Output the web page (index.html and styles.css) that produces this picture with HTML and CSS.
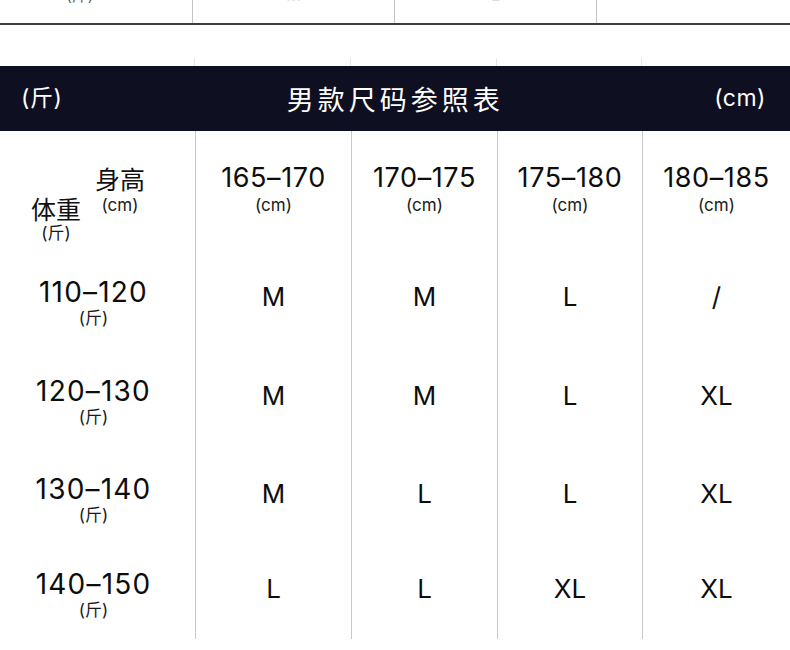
FILE: index.html
```html
<!DOCTYPE html>
<html lang="zh">
<head>
<meta charset="utf-8">
<title>男款尺码参照表</title>
<link rel="stylesheet" href="styles.css">
</head>
<body>
<div class="page">
  <div class="prev-row">
    <div class="prev-cell"><span class="peek dark">(斤)</span></div>
    <div class="prev-cell"><span class="peek">M</span></div>
    <div class="prev-cell"><span class="peek">L</span></div>
    <div class="prev-cell"></div>
  </div>
  <div class="spacer">
    <div class="tick-col"></div>
    <div class="tick-col"></div>
    <div class="tick-col"></div>
    <div class="tick-col"></div>
    <div class="tick-col last"></div>
  </div>
  <div class="banner">
    <span class="banner-unit">(斤)</span>
    <span class="banner-title">男款尺码参照表</span>
    <span class="banner-unit">(cm)</span>
  </div>
  <div class="table">
    <div class="row head">
      <div class="cell corner">
        <div class="corner-w"><div class="cj">体重</div><div class="unit">(斤)</div></div>
        <div class="corner-h"><div class="cj">身高</div><div class="unit">(cm)</div></div>
      </div>
      <div class="cell col"><div class="num">165–170</div><div class="unit">(cm)</div></div>
      <div class="cell col"><div class="num">170–175</div><div class="unit">(cm)</div></div>
      <div class="cell col"><div class="num">175–180</div><div class="unit">(cm)</div></div>
      <div class="cell col"><div class="num">180–185</div><div class="unit">(cm)</div></div>
    </div>
    <div class="row r1">
      <div class="cell label"><div class="num">110–120</div><div class="unit">(斤)</div></div>
      <div class="cell size">M</div>
      <div class="cell size">M</div>
      <div class="cell size">L</div>
      <div class="cell size">/</div>
    </div>
    <div class="row r2">
      <div class="cell label"><div class="num">120–130</div><div class="unit">(斤)</div></div>
      <div class="cell size">M</div>
      <div class="cell size">M</div>
      <div class="cell size">L</div>
      <div class="cell size">XL</div>
    </div>
    <div class="row r3">
      <div class="cell label"><div class="num">130–140</div><div class="unit">(斤)</div></div>
      <div class="cell size">M</div>
      <div class="cell size">L</div>
      <div class="cell size">L</div>
      <div class="cell size">XL</div>
    </div>
    <div class="row r4">
      <div class="cell label"><div class="num">140–150</div><div class="unit">(斤)</div></div>
      <div class="cell size">L</div>
      <div class="cell size">L</div>
      <div class="cell size">XL</div>
      <div class="cell size">XL</div>
    </div>
  </div>
</div>
</body>
</html>
```
FILE: styles.css
```css
html, body {
  margin: 0;
  padding: 0;
  background: #ffffff;
}
body {
  font-family: Inter, "Noto Sans CJK SC", sans-serif;
  color: #111111;
}
.page {
  width: 790px;
  height: 650px;
  overflow: hidden;
}

/* previous table remnant */
.prev-row {
  display: grid;
  grid-template-columns: 192px 202px 202px 1fr;
  height: 23px;
  border-bottom: 2px solid #3c3c3c;
  overflow: hidden;
}
.prev-cell {
  border-left: 1px solid #c4c4c4;
  display: flex;
  justify-content: center;
  align-items: flex-end;
  overflow: hidden;
}
.prev-cell:first-child {
  border-left: none;
  justify-content: flex-start;
  padding-left: 66px;
}
.peek {
  font-size: 16px;
  line-height: 16px;
  margin-bottom: 20px;
  color: #dcdcdc;
}
.peek.dark {
  color: #666666;
}

/* spacer with faint ticks */
.spacer {
  display: grid;
  grid-template-columns: 195px 156px 146px 145px 1fr;
  height: 41px;
  align-items: end;
}
.tick-col {
  height: 8px;
  border-right: 1px solid #e6e6e6;
}
.tick-col.last {
  border-right: none;
}

/* dark banner */
.banner {
  height: 65px;
  background: #0f0f22;
  color: #ffffff;
  display: flex;
  align-items: center;
  justify-content: space-between;
  padding: 0 24px 0 21px;
}
.banner-unit {
  font-size: 23px;
  line-height: 1;
  letter-spacing: 0.5px;
  font-family: Inter, "Noto Sans CJK SC", sans-serif;
}
.banner-title {
  font-family: "Noto Sans CJK SC", sans-serif;
  font-size: 27px;
  letter-spacing: 4px;
  line-height: 1;
  margin-left: 14px;
}

/* table */
.table {
  display: flex;
  flex-direction: column;
}
.row {
  display: grid;
  grid-template-columns: 195px 156px 146px 145px 1fr;
}
.row.head { height: 116px; }
.row.r1 { height: 99px; }
.row.r2 { height: 98px; }
.row.r3 { height: 95px; }
.row.r4 { height: 100px; }

.cell {
  border-left: 1px solid #c8c8c8;
  display: flex;
  flex-direction: column;
  align-items: center;
}
.cell:first-child {
  border-left: none;
}

.num {
  font-size: 27px;
  font-weight: 400;
  line-height: 26px;
  letter-spacing: 0.6px;
  color: #0d0d0d;
}
.label .num {
  font-size: 28px;
  letter-spacing: 1.2px;
}
.unit {
  font-size: 17px;
  font-weight: 400;
  line-height: 16px;
  margin-top: 6px;
  color: #1a1a1a;
}
.col {
  padding-top: 34px;
}
.label {
  padding-top: 32px;
  padding-right: 8px;
}
.label .unit {
  margin-top: 5px;
}
.size {
  padding-top: 37px;
  font-size: 26px;
  font-weight: 400;
  line-height: 26px;
  color: #0d0d0d;
}

.corner {
  flex-direction: row;
  align-items: flex-start;
  padding-left: 31px;
  gap: 14px;
}
.corner .cj {
  font-family: "Noto Sans CJK SC", sans-serif;
  font-size: 25px;
  line-height: 24px;
}
.corner-w {
  display: flex;
  flex-direction: column;
  align-items: center;
  padding-top: 65px;
}
.corner-w .unit {
  margin-top: 5px;
}
.corner-h {
  display: flex;
  flex-direction: column;
  align-items: center;
  padding-top: 35px;
}
.corner-h .unit {
  margin-top: 7px;
}
```
